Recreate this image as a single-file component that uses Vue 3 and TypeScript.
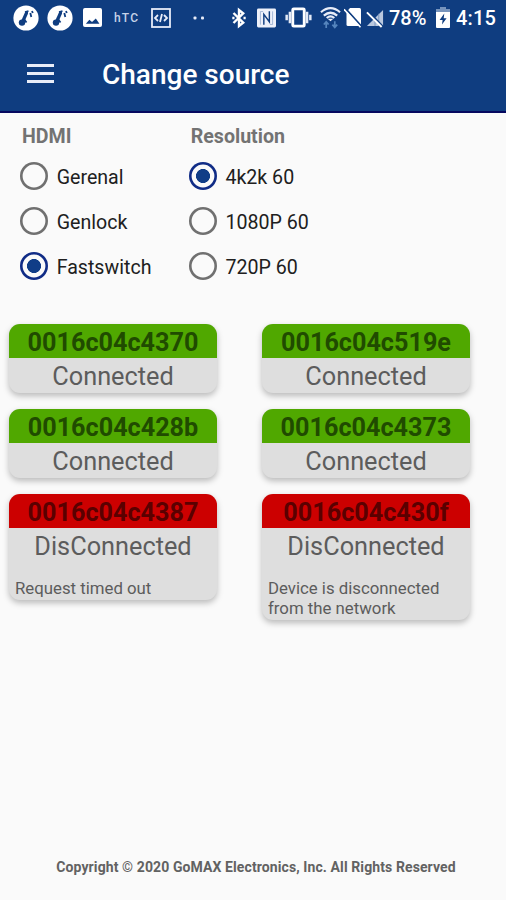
<script setup lang="ts">
import { ref } from 'vue'

interface OptionGroup {
  title: string
  name: string
  options: string[]
}

interface Device {
  id: string
  online: boolean
  message?: string
}

const groups: OptionGroup[] = [
  { title: 'HDMI', name: 'hdmi', options: ['Gerenal', 'Genlock', 'Fastswitch'] },
  { title: 'Resolution', name: 'resolution', options: ['4k2k 60', '1080P 60', '720P 60'] },
]

const selected = ref<Record<string, string>>({ hdmi: 'Fastswitch', resolution: '4k2k 60' })

const devices: Device[] = [
  { id: '0016c04c4370', online: true },
  { id: '0016c04c519e', online: true },
  { id: '0016c04c428b', online: true },
  { id: '0016c04c4373', online: true },
  { id: '0016c04c4387', online: false, message: 'Request timed out' },
  { id: '0016c04c430f', online: false, message: 'Device is disconnected from the network' },
]
</script>

<template>
  <div class="screen">
    <header class="top">
      <div class="status">
        <svg v-for="n in 2" :key="n" class="app-icon" viewBox="0 0 26 26">
          <circle cx="13" cy="13" r="12.6" fill="#fff" />
          <path d="M9 18L13.5 8" stroke="#0f3d80" stroke-width="3.2" stroke-linecap="round" />
          <circle cx="9" cy="17.6" r="3.2" fill="#0f3d80" />
          <path d="M12 7l3.5-1M11 14l2.5 3.5M17.3 8l1 4M19 6l.8 2" stroke="#0f3d80" stroke-width="1.8" />
        </svg>
        <svg class="picture-icon" viewBox="0 0 20 20">
          <rect width="20" height="20" rx="2" fill="#fff" />
          <path d="M3 16.5l3.7-4.2 2.8 2.4 4-3.7 3.8 5.5z" fill="#0f3d80" />
        </svg>
        <span class="htc">hTC</span>
        <svg class="code-icon" viewBox="0 0 20 20" fill="none" stroke="#e7ecf8">
          <rect x="1" y="1" width="18" height="18" stroke-width="1.8" />
          <path d="M7 7L4 10l3 3M13 7l3 3-3 3M11 6l-2 8" stroke-width="1.8" />
        </svg>
        <svg class="dots-icon" viewBox="0 0 12 4" fill="#e7ecf8">
          <rect x=".5" y=".5" width="3" height="3" rx="1" />
          <rect x="8" y=".5" width="3" height="3" rx="1" />
        </svg>
        <svg class="bluetooth-icon" viewBox="0 0 14 22" fill="none" stroke="#fff" stroke-width="2.4">
          <path d="M1.5 6l9.7 9.7L7 19V3l4.2 3.3L1.5 16" />
          <path d="M.3 11h2.2M11.5 11h2.2" />
        </svg>
        <svg class="nfc-icon" viewBox="0 0 20 20">
          <rect width="20" height="20" rx="1.5" fill="#eef1fa" />
          <path d="M7.2 17V6.2L13 14V3" fill="none" stroke="#0f3d80" stroke-width="1.5" />
          <path d="M3.6 17V3.2h2.8M16.4 3v13.8h-2.8" fill="none" stroke="#8fa6cc" stroke-width=".8" />
        </svg>
        <svg class="vibrate-icon" viewBox="0 0 28 22">
          <rect x="8" y="2" width="12" height="18" rx="1" fill="none" stroke="#fff" stroke-width="3" />
          <path d="M5 5v12M23 5v12M1.6 8v6M26.4 8v6" stroke="#e4eaf6" stroke-width="2.6" />
        </svg>
        <svg class="wifi-icon" viewBox="0 0 22 23">
          <path d="M1 5.5Q11-3 21 5.5M4 9Q11 3 18 9M7 11.5q4-3.2 8 0" fill="none" stroke="#e8edf8" stroke-width="2.3" />
          <path d="M8 12.2h6L11 15z" fill="#e8edf8" />
          <path d="M6.5 22v-6M4 18.3L6.5 15.5 9 18.3M15.5 15v6M13 18.5l2.5 2.8 2.5-2.8" fill="none" stroke="#5585bd" stroke-width="1.8" />
        </svg>
        <svg class="sim-icon" viewBox="0 0 18 21">
          <path d="M6 1h9.5q1.5 0 1.5 1.5v15q0 1.5-1.5 1.5H4q-1.5 0-1.5-1.5V5z" fill="#fff" />
          <path d="M1.4 1.3l16 18" stroke="#0f3d80" stroke-width="1.8" />
          <path d="M0 2.3l16.5 18" stroke="#fff" stroke-width="1.6" />
        </svg>
        <svg class="signal-icon" viewBox="0 0 19 21">
          <path d="M18 2v17H1z" fill="#b9c8df" />
          <path d="M9.5 10v9M13.5 6v13" stroke="#7591ba" stroke-width="1" />
          <path d="M2.5 3.5L18 19.5" stroke="#0f3d80" stroke-width="1.8" />
          <path d="M1 4.5L16.5 20" stroke="#fff" stroke-width="2" />
        </svg>
        <span class="percent">78%</span>
        <svg class="battery-icon" viewBox="0 0 14 22">
          <path d="M4 0h6v2h4v5H0V2h4z" fill="#7794bc" />
          <path d="M0 5h14v15q0 1-1 1H1q-1 0-1-1z" fill="#fff" />
          <path d="M8.3 6.5L3.6 13h3L6 17.5l4.6-6.3H7.7z" fill="#0f3d80" />
        </svg>
        <span class="clock">4:15</span>
      </div>
      <div class="toolbar">
        <button class="menu" aria-label="Menu"><i /><i /><i /></button>
        <h1>Change source</h1>
      </div>
    </header>

    <main>
      <section class="groups">
        <div v-for="group in groups" :key="group.name" class="group">
          <h2>{{ group.title }}</h2>
          <label v-for="option in group.options" :key="option">
            <input v-model="selected[group.name]" type="radio" :name="group.name" :value="option" />
            <span>{{ option }}</span>
          </label>
        </div>
      </section>

      <section class="devices">
        <article v-for="device in devices" :key="device.id" class="card">
          <h3 :class="{ offline: !device.online }">{{ device.id }}</h3>
          <p class="state">{{ device.online ? 'Connected' : 'DisConnected' }}</p>
          <p v-if="device.message" class="message">{{ device.message }}</p>
        </article>
      </section>
    </main>

    <footer>Copyright © 2020 GoMAX Electronics, Inc. All Rights Reserved</footer>
  </div>
</template>

<style>
body {
  margin: 0;
}
</style>

<style scoped>
.screen {
  display: flex;
  flex-direction: column;
  box-sizing: border-box;
  width: 506px;
  height: 900px;
  overflow: hidden;
  background: #fafafa;
  font-family: Roboto, sans-serif;
}
h1, h2, h3, p {
  margin: 0;
}
.top {
  box-sizing: border-box;
  flex: none;
  height: 113px;
  background: #0f3d80;
  border-bottom: 2px solid #06085f;
  color: #fff;
}
.status {
  display: flex;
  align-items: center;
  height: 35px;
  padding-left: 13px;
  white-space: nowrap;
}
.status > * {
  flex: none;
}
.app-icon {
  width: 26px;
  height: 26px;
  margin-right: 8px;
}
.picture-icon {
  width: 19px;
  height: 19px;
  margin-left: 2px;
}
.htc {
  width: 26px;
  margin-left: 12px;
  font: 500 12px/20px Roboto, sans-serif;
  letter-spacing: 1.2px;
  color: #c5d2e8;
}
.code-icon {
  width: 20px;
  height: 20px;
  margin-left: 11px;
}
.dots-icon {
  width: 12px;
  height: 4px;
  margin-left: 22px;
}
.bluetooth-icon {
  width: 14px;
  height: 22px;
  margin-left: 27px;
}
.nfc-icon {
  width: 19px;
  height: 20px;
  margin-left: 11px;
}
.vibrate-icon {
  width: 27px;
  height: 21px;
  margin-left: 9px;
}
.wifi-icon {
  width: 21px;
  height: 22px;
  margin-left: 8px;
}
.sim-icon {
  width: 18px;
  height: 21px;
  margin-left: 3px;
}
.signal-icon {
  width: 18px;
  height: 20px;
  margin-left: 4px;
}
.percent {
  width: 38px;
  margin-left: 5px;
  padding-top: 1px;
  font-size: 20px;
  font-weight: 500;
  line-height: 24px;
}
.battery-icon {
  width: 14px;
  height: 22px;
  margin-left: 9px;
}
.clock {
  margin-left: 6px;
  padding-top: 1px;
  font-size: 20px;
  font-weight: 500;
  line-height: 24px;
  letter-spacing: 0.2px;
}
.toolbar {
  display: flex;
  align-items: center;
  height: 78px;
  padding-left: 27px;
}
.menu {
  display: flex;
  flex-direction: column;
  gap: 5px;
  width: 27px;
  margin-bottom: 1px;
  padding: 0;
  border: 0;
  background: none;
}
.menu i {
  width: 27px;
  height: 3px;
  background: #e9edf8;
}
h1 {
  margin-left: 48px;
  padding-top: 2px;
  font-size: 28px;
  font-weight: 500;
  line-height: 34px;
}
.groups {
  display: flex;
  height: 211px;
  padding-left: 20px;
  box-sizing: border-box;
}
.group {
  width: 168.7px;
}
.group h2 {
  height: 41px;
  padding: 12px 0 0 2px;
  box-sizing: border-box;
  font-size: 19.6px;
  font-weight: 700;
  line-height: 24px;
  color: #737373;
}
.group label {
  display: flex;
  align-items: center;
  height: 45px;
  font-size: 19.6px;
  line-height: 24px;
  color: #202020;
  white-space: nowrap;
}
.group label span {
  padding-top: 2px;
}
.group input {
  flex: none;
  appearance: none;
  width: 28px;
  height: 28px;
  margin: 0 8.7px 1px 0;
  border-radius: 50%;
  box-shadow: inset 0 0 0 2.6px #707070;
}
.group input:checked {
  background: radial-gradient(circle, #103d87 6.7px, transparent 7.3px);
  box-shadow: inset 0 0 0 2.6px #102c86;
}
.devices {
  display: grid;
  grid-template-columns: 208px 208px;
  column-gap: 45px;
  row-gap: 16px;
  align-items: start;
  padding-left: 9px;
}
.card {
  overflow: hidden;
  min-height: 69px;
  border-radius: 11px;
  background: #dedede;
  box-shadow: 0 3px 6px rgba(0, 0, 0, 0.26);
  color: #5c5c5c;
}
.card h3 {
  height: 34px;
  background: #50a800;
  color: #204b00;
  font-size: 25.2px;
  font-weight: 700;
  line-height: 37px;
  text-align: center;
}
.card h3.offline {
  background: #cc0000;
  color: #5a0000;
}
.state {
  height: 35px;
  font-size: 25.3px;
  line-height: 38px;
  text-align: center;
}
.message {
  padding: 16px 6px 1px;
  font-size: 16.8px;
  line-height: 19.8px;
}
footer {
  margin-top: auto;
  height: 43px;
  padding-left: 6px;
  font-size: 14px;
  font-weight: 700;
  line-height: 20px;
  letter-spacing: 0.1px;
  text-align: center;
  color: #626262;
}
</style>
